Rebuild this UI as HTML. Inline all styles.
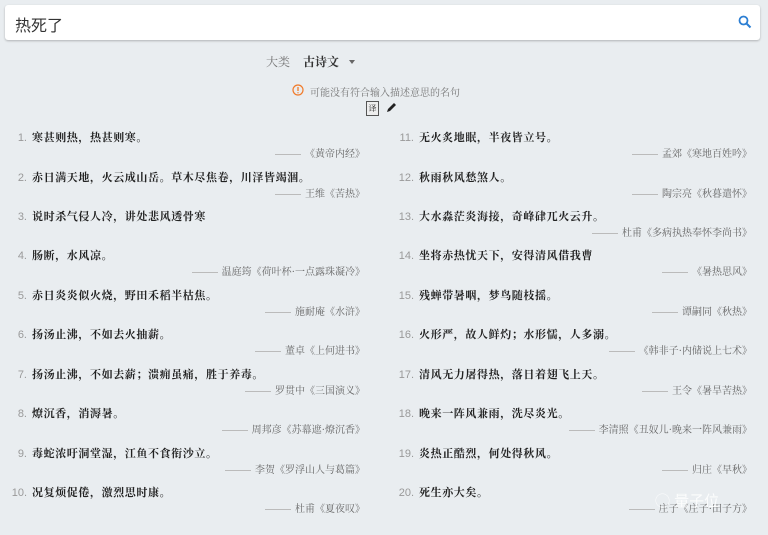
<!DOCTYPE html>
<html><head><meta charset="utf-8"><style>
body{margin:0;width:768px;height:535px;background:#e9edf0;font-family:"Liberation Serif","Noto Serif CJK SC",serif;overflow:hidden;position:relative;color:#222}
.bar{position:absolute;left:5px;top:5px;width:755px;height:35px;background:#fff;border-radius:3px;box-shadow:0 1px 2px rgba(0,0,0,.25)}
.bar span{position:absolute;left:10px;top:7px;font-family:"Liberation Sans","Noto Sans CJK SC",sans-serif;font-size:16px;color:#333}
.it{position:absolute;width:360px;height:40px}
.n{position:absolute;right:338px;top:0;font-family:"Liberation Sans",sans-serif;font-size:11px;color:#999;line-height:16px}
.t{position:absolute;left:27px;top:0;font-size:11px;font-weight:bold;line-height:16px;white-space:nowrap;letter-spacing:.6px}
.a{position:absolute;right:0;top:18px;font-size:10px;color:#666;line-height:14px;white-space:nowrap}
.a:before{content:"";display:inline-block;width:26px;border-top:1px solid #bbb;vertical-align:middle;margin-right:4px}
</style></head><body>
<div class="bar"><span>热死了</span>
<svg style="position:absolute;right:8px;top:10px" width="14" height="14" viewBox="0 0 14 14"><circle cx="5.5" cy="5.5" r="4" fill="none" stroke="#2d7fd3" stroke-width="1.8"/><path d="M8.5 8.5L12.5 12.5" stroke="#2d7fd3" stroke-width="2"/></svg></div>
<div style="position:absolute;left:266px;top:53px;font-size:12px;color:#777">大类</div>
<div style="position:absolute;left:303px;top:53px;font-size:12px;font-weight:bold;color:#333">古诗文</div>
<div style="position:absolute;left:349px;top:60px;border:3.5px solid transparent;border-top:4px solid #666"></div>
<svg style="position:absolute;left:292px;top:84px" width="12" height="12"><circle cx="6" cy="6" r="5" fill="none" stroke="#f07a2a" stroke-width="1.2"/><path d="M6 3v4M6 8.3v1" stroke="#f07a2a" stroke-width="1.3"/></svg>
<div style="position:absolute;left:310px;top:84px;font-size:10px;color:#777">可能没有符合输入描述意思的名句</div>
<div style="position:absolute;left:366px;top:101px;width:11px;height:13px;border:1px solid #555;font-size:8px;line-height:13px;text-align:center;background:#eee">译</div>
<svg style="position:absolute;left:385px;top:101px" width="12" height="13"><path d="M2 11L3 8L9 2L11 4L5 10Z" fill="#222"/></svg>
<div class="it" style="left:5px;top:130px"><span class="n">1.</span><span class="t">寒甚则热，热甚则寒。</span><span class="a">《黄帝内经》</span></div>
<div class="it" style="left:5px;top:170px"><span class="n">2.</span><span class="t">赤日满天地，火云成山岳。草木尽焦卷，川泽皆竭涸。</span><span class="a">王维《苦热》</span></div>
<div class="it" style="left:5px;top:209px"><span class="n">3.</span><span class="t">说时杀气侵人冷，讲处悲风透骨寒</span></div>
<div class="it" style="left:5px;top:248px"><span class="n">4.</span><span class="t">肠断，水风凉。</span><span class="a">温庭筠《荷叶杯·一点露珠凝冷》</span></div>
<div class="it" style="left:5px;top:288px"><span class="n">5.</span><span class="t">赤日炎炎似火烧，野田禾稻半枯焦。</span><span class="a">施耐庵《水浒》</span></div>
<div class="it" style="left:5px;top:327px"><span class="n">6.</span><span class="t">扬汤止沸，不如去火抽薪。</span><span class="a">董卓《上何进书》</span></div>
<div class="it" style="left:5px;top:367px"><span class="n">7.</span><span class="t">扬汤止沸，不如去薪；溃痈虽痛，胜于养毒。</span><span class="a">罗贯中《三国演义》</span></div>
<div class="it" style="left:5px;top:406px"><span class="n">8.</span><span class="t">燎沉香，消溽暑。</span><span class="a">周邦彦《苏幕遮·燎沉香》</span></div>
<div class="it" style="left:5px;top:446px"><span class="n">9.</span><span class="t">毒蛇浓吁洞堂湿，江鱼不食衔沙立。</span><span class="a">李贺《罗浮山人与葛篇》</span></div>
<div class="it" style="left:5px;top:485px"><span class="n">10.</span><span class="t">况复烦促倦，激烈思时康。</span><span class="a">杜甫《夏夜叹》</span></div>
<div class="it" style="left:392px;top:130px"><span class="n">11.</span><span class="t">无火炙地眠，半夜皆立号。</span><span class="a">孟郊《寒地百姓吟》</span></div>
<div class="it" style="left:392px;top:170px"><span class="n">12.</span><span class="t">秋雨秋风愁煞人。</span><span class="a">陶宗亮《秋暮遣怀》</span></div>
<div class="it" style="left:392px;top:209px"><span class="n">13.</span><span class="t">大水淼茫炎海接，奇峰硉兀火云升。</span><span class="a">杜甫《多病执热奉怀李尚书》</span></div>
<div class="it" style="left:392px;top:248px"><span class="n">14.</span><span class="t">坐将赤热忧天下，安得清风借我曹</span><span class="a">《暑热思风》</span></div>
<div class="it" style="left:392px;top:288px"><span class="n">15.</span><span class="t">残蝉带暑咽，梦鸟随枝摇。</span><span class="a">谭嗣同《秋热》</span></div>
<div class="it" style="left:392px;top:327px"><span class="n">16.</span><span class="t">火形严，故人鲜灼；水形懦，人多溺。</span><span class="a">《韩非子·内储说上七术》</span></div>
<div class="it" style="left:392px;top:367px"><span class="n">17.</span><span class="t">清风无力屠得热，落日着翅飞上天。</span><span class="a">王令《暑旱苦热》</span></div>
<div class="it" style="left:392px;top:406px"><span class="n">18.</span><span class="t">晚来一阵风兼雨，洗尽炎光。</span><span class="a">李清照《丑奴儿·晚来一阵风兼雨》</span></div>
<div class="it" style="left:392px;top:446px"><span class="n">19.</span><span class="t">炎热正酷烈，何处得秋风。</span><span class="a">归庄《早秋》</span></div>
<div class="it" style="left:392px;top:485px"><span class="n">20.</span><span class="t">死生亦大矣。</span><span class="a">庄子《庄子·田子方》</span></div>
<div style="position:absolute;left:655px;top:490px;font-family:'Liberation Sans','Noto Sans CJK SC',sans-serif;font-size:15px;color:rgba(255,255,255,.85)">◯ 量子位</div>
</body></html>
